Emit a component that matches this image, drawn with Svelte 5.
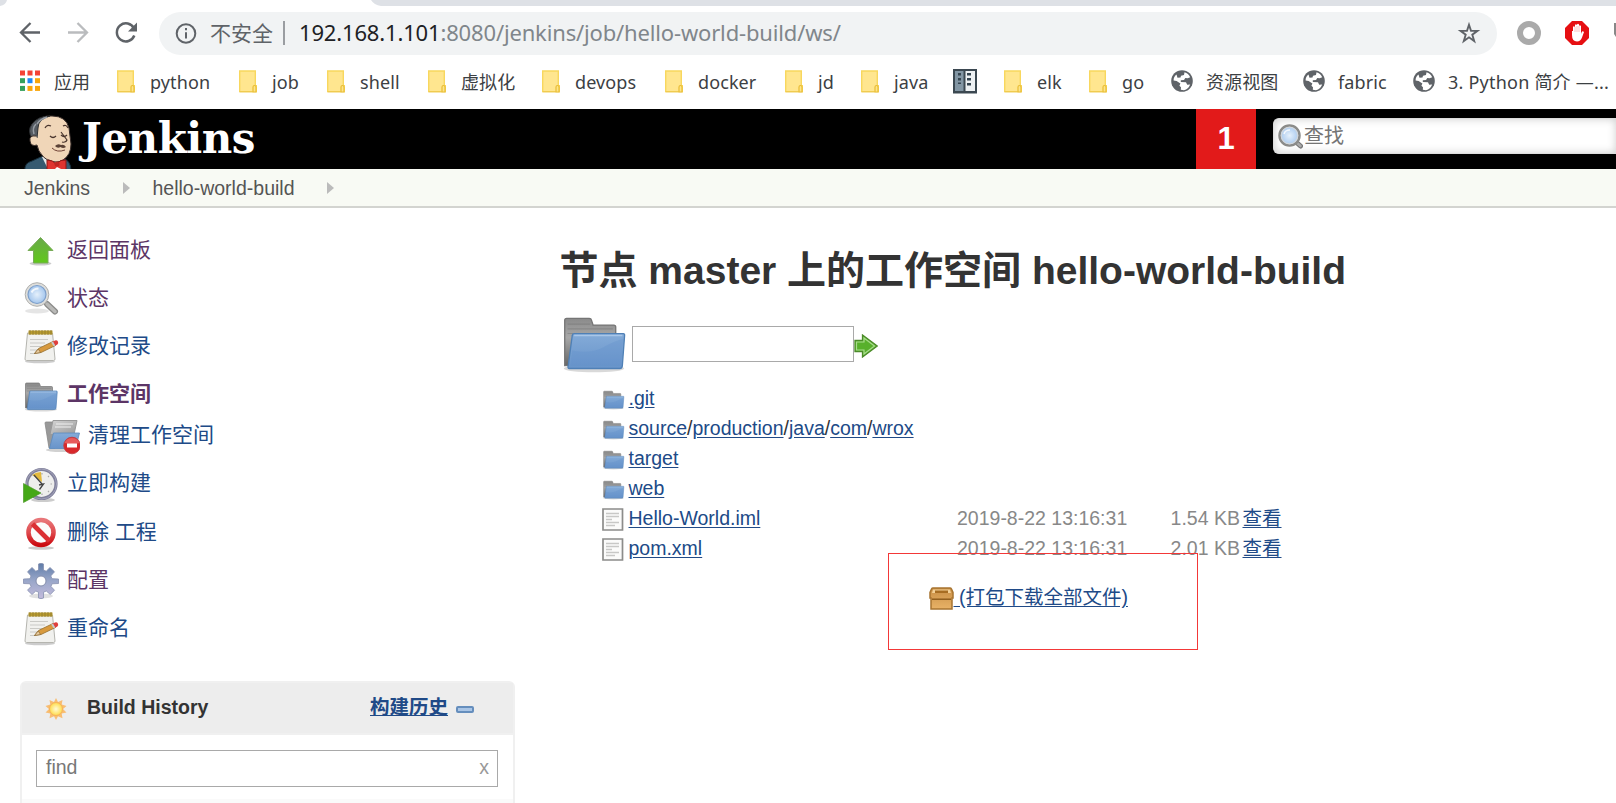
<script>
  const bookmarks = [
    { icon: 'apps', label: '应用', width: 97 },
    { icon: 'folder', label: 'python', width: 122 },
    { icon: 'folder', label: 'job', width: 88 },
    { icon: 'folder', label: 'shell', width: 101 },
    { icon: 'folder', label: '虚拟化', width: 114 },
    { icon: 'folder', label: 'devops', width: 123 },
    { icon: 'folder', label: 'docker', width: 120 },
    { icon: 'folder', label: 'jd', width: 76 },
    { icon: 'folder', label: 'java', width: 92 },
    { icon: 'book', label: '', width: 51 },
    { icon: 'folder', label: 'elk', width: 85 },
    { icon: 'folder', label: 'go', width: 82 },
    { icon: 'globe', label: '资源视图', width: 132 },
    { icon: 'globe', label: 'fabric', width: 110 },
    { icon: 'globe', label: '3. Python 简介 —...', width: 210 }
  ];
  const tasks = [
    { icon: 'up', label: '返回面板', visited: true },
    { icon: 'search', label: '状态', visited: true },
    { icon: 'notepad', label: '修改记录' },
    { icon: 'folder', label: '工作空间', visited: true, active: true },
    { icon: 'wipe', label: '清理工作空间', sub: true },
    { icon: 'clock', label: '立即构建' },
    { icon: 'stop', label: '删除 工程' },
    { icon: 'gear', label: '配置', visited: true },
    { icon: 'notepad', label: '重命名' }
  ];
  const files = [
    { path: ['.git'] },
    { path: ['source', 'production', 'java', 'com', 'wrox'] },
    { path: ['target'] },
    { path: ['web'] },
    { path: ['Hello-World.iml'], date: '2019-8-22 13:16:31', size: '1.54 KB' },
    { path: ['pom.xml'], date: '2019-8-22 13:16:31', size: '2.01 KB' }
  ];
  const dots = ['#f44336', '#f44336', '#f44336', '#34a05c', '#1e88f5', '#f9a60a', '#34a05c', '#f9a60a', '#f9a60a'];
</script>

{#snippet folder(size)}
  <svg width={size} height={size} viewBox="0 0 36 36">
    <ellipse cx="18" cy="31.500" rx="16" ry="2" fill="#000" opacity=".15" />
    <path d="M2.500 30V6q0-1 1-1h12q1 0 1.200 1l.8 2.500h11q1 0 1 1V29z" fill="url(#grey)" stroke="#757575" stroke-width=".7" />
    <path d="M4 8h12M4 10.500h24M4 13h24" stroke="#777" stroke-width=".6" opacity=".5" />
    <path d="M7.500 13H33.500q.8 0 .7 1L33 30q-.1 1.500-1.300 1.500H5q-1 0-.7-1.200l2.200-16.300q.1-1 1-1z" fill="url(#blue)" stroke="#4f80b6" stroke-width=".7" />
    <path d="M7.500 14h25.500" stroke="#a9c6e8" stroke-width=".8" />
    <path d="M6.500 22q10 2 17-2t10-4l-1.200 14H5.500z" fill="#5f8fcb" opacity=".3" />
  </svg>
{/snippet}

{#snippet loupe(size)}
  <svg width={size} height={size} viewBox="0 0 36 36">
    <ellipse cx="14" cy="30" rx="12" ry="2.500" fill="#000" opacity=".1" />
    <path d="M24 23l8 7.500" stroke="#8b8b89" stroke-width="6" stroke-linecap="round" />
    <path d="M24 23l8 7.500" stroke="#b9b9b7" stroke-width="3.500" stroke-linecap="round" />
    <circle cx="14" cy="13.500" r="11.800" fill="#dededb" stroke="#b0b0ae" stroke-width="1" />
    <circle cx="14" cy="13.500" r="9" fill="url(#lens)" stroke="#7d9fca" stroke-width="1.200" />
    <path d="M8.500 11.500q2-4 7-4" stroke="#fff" stroke-width="2" fill="none" opacity=".8" />
  </svg>
{/snippet}

{#snippet searchLoupe()}
  <svg width="25" height="25" viewBox="0 0 25 25">
    <path d="M18 18l4.500 4" stroke="#777" stroke-width="5" stroke-linecap="round" />
    <path d="M18.500 18.500l4 3.500" stroke="#aaa" stroke-width="2.500" stroke-linecap="round" />
    <circle cx="11.500" cy="11.500" r="10" fill="url(#lens)" stroke="#8b8b89" stroke-width="2.500" />
    <circle cx="11.500" cy="11.500" r="8.300" fill="none" stroke="#d2d6da" stroke-width="1.200" />
    <path d="M6 10q1-4 6-4" stroke="#fff" stroke-width="1.500" fill="none" opacity=".8" />
  </svg>
{/snippet}

{#snippet taskIcon(name)}
  {#if name === 'folder'}
    {@render folder(36)}
  {:else if name === 'search'}
    {@render loupe(36)}
  {:else}
    <svg width="36" height="36" viewBox="0 0 36 36">
      {#if name === 'up'}
        <ellipse cx="17.500" cy="30.500" rx="11" ry="2" fill="#000" opacity=".2" />
        <path d="M17.500 4.500L30 17.500H25V30H10.500V17.500H5z" fill="url(#green)" stroke="#78ab58" stroke-width="1" stroke-linejoin="round" />
      {:else if name === 'notepad'}
        <ellipse cx="17" cy="32.500" rx="15" ry="1.800" fill="#000" opacity=".2" />
        <path d="M4.500 4h25l2.500 26q0 1.500-1.500 1.500h-27Q2 31.500 2 30z" fill="#f1f1ee" stroke="#b5b5af" stroke-width="1" />
        <path d="M5.500 1.500h24v4h-24z" fill="#b89b2e" />
        <path d="M7 1v5M10 1v5M13 1v5M16 1v5M19 1v5M22 1v5M25 1v5M28 1v5" stroke="#8d7932" stroke-width=".8" />
        <path d="M7 10.500h18M7 14h15M7 17.500h12M7 21h8M7 24.500h6" stroke="#cacac6" stroke-width="1.200" />
        <path d="M11.500 24.500l4-5L30 12.500l2.500 4L18 23.500z" fill="#d89a3e" stroke="#95702f" stroke-width=".8" />
        <path d="M11.500 24.500l3.800-4.500 2.200 3.500z" fill="#e9cda1" stroke="#80602f" stroke-width=".6" />
        <path d="M29.500 12.700l2.500-1.200q2-.6 2.900 1t-.5 3l-2.200 1.200z" fill="#df3f3c" />
        <path d="M28.200 13.400l1.800-.9 2.300 4-1.700.8z" fill="#c6c9cc" />
      {:else if name === 'wipe'}
        <ellipse cx="17" cy="31" rx="15" ry="2" fill="#000" opacity=".18" />
        <path d="M1 4q0-1 1-1h7l2 26H5z" fill="#999" stroke="#888" stroke-width=".8" />
        <path d="M9 1.500h24l-3 14H6z" fill="url(#paper)" stroke="#999" stroke-width="1" />
        <path d="M12 5h17M11 8h16" stroke="#f0f0f0" stroke-width="1.200" />
        <path d="M9.500 14H35.500l-4 15.500H5.500z" fill="url(#blue)" stroke="#5b8abf" stroke-width=".8" />
        <circle cx="28" cy="26.500" r="8.300" fill="#d8282b" stroke="#c13a3f" stroke-width=".8" />
        <path d="M20.500 24q2-5 7.500-5t7.500 5q-7 2-15 0z" fill="#ef7777" opacity=".65" />
        <path d="M23 24.500h10v4H23z" fill="#fff" />
      {:else if name === 'clock'}
        <ellipse cx="20" cy="33" rx="12" ry="2" fill="#000" opacity=".2" />
        <circle cx="18.500" cy="17" r="14.500" fill="#eeeeec" stroke="#80809b" stroke-width="3.200" />
        <circle cx="18.500" cy="17" r="15" fill="none" stroke="#aaaac0" stroke-width=".8" />
        <path d="M19 15L9 8q4-3 9-3z" fill="#e3b93d" />
        <path d="M11 8l8 9M16 18l4.500-1-4 5.500" stroke="#444" stroke-width="1.300" fill="none" />
        <path d="M19 6v1.500M29 17h-1.500M19 28v-1.500M26 9l-1 1M26 25l-1-1" stroke="#aaa" stroke-width="1.200" />
        <path d="M.5 16.500v19L18 26z" fill="#45a817" stroke="#4d9a29" stroke-width=".7" />
      {:else if name === 'stop'}
        <ellipse cx="18" cy="33" rx="13" ry="1.800" fill="#000" opacity=".2" />
        <circle cx="18" cy="17.500" r="12.500" fill="#fbfbfb" stroke="url(#red)" stroke-width="4.600" />
        <path d="M9.500 9l17 17" stroke="#db3034" stroke-width="4.600" />
      {:else if name === 'gear'}
        <ellipse cx="18" cy="33" rx="12" ry="2.500" fill="#000" opacity=".12" />
        <path d="M15.500 7V1q2.500-1.500 5 0v6l2.700 1.200L27 4.500l4.500 4.300-3.700 4.100 1.200 2.800 6.500.3v4.500L29 20.800l-1 2.700 3.500 3.700-4.200 4.300-4-3.500-2.800 1.200V35q-2.500 1.200-5 0v-5.800L12.800 28 9 31.500l-4.500-4.300L8 23.500l-1-2.700-6.500-.3V16l6.500-.3 1-2.800-3.500-4.100L9 4.500l3.800 3.700z" fill="url(#gear)" stroke="#8790b0" stroke-width=".8" stroke-linejoin="round" />
        <circle cx="18" cy="18" r="5" fill="#fff" stroke="#858eac" stroke-width="1" />
      {/if}
    </svg>
  {/if}
{/snippet}

<svg class="defs" width="0" height="0" aria-hidden="true">
  <defs>
    <linearGradient id="grey" x2="0" y2="1"><stop stop-color="#8a8a8a" /><stop offset=".4" stop-color="#a8a8a8" /><stop offset="1" stop-color="#666" /></linearGradient>
    <linearGradient id="paper" x2="1" y2="1"><stop stop-color="#d5d5d5" /><stop offset="1" stop-color="#999" /></linearGradient>
    <linearGradient id="blue" x2="0" y2="1"><stop stop-color="#84abd8" /><stop offset="1" stop-color="#6894ca" /></linearGradient>
    <linearGradient id="green" x2="0" y2="1"><stop stop-color="#69a94a" /><stop offset="1" stop-color="#60c81a" /></linearGradient>
    <linearGradient id="red" x2="0" y2="1"><stop stop-color="#e87679" /><stop offset=".5" stop-color="#df4a4e" /><stop offset="1" stop-color="#cb0a10" /></linearGradient>
    <linearGradient id="gear" x2="0" y2="1"><stop stop-color="#5e7ca8" /><stop offset=".5" stop-color="#9aa7c9" /><stop offset="1" stop-color="#c3bbdc" /></linearGradient>
    <radialGradient id="lens"><stop stop-color="#e5f0fb" /><stop offset="1" stop-color="#a4c6ed" /></radialGradient>
    <radialGradient id="sun"><stop stop-color="#fffbd5" /><stop offset="1" stop-color="#ffdc4c" /></radialGradient>
    <linearGradient id="box" x2="0" y2="1"><stop stop-color="#c98f45" /><stop offset="1" stop-color="#e8b267" /></linearGradient>
  </defs>
</svg>

<div class="window">
  <div class="tabs">
    <svg width="1616" height="6" viewBox="0 0 1616 6">
      <path d="M0 0h7Q6 5 0 6zM371 0h1245v6H381q-7-1-10-6z" fill="#dee1e6" />
    </svg>
  </div>
  <div class="toolbar">
    <svg class="nav" width="140" height="28" viewBox="0 0 140 28" fill="none" stroke-width="2.300">
      <path d="M40 14.500H21.500M30.500 5L21 14.500l9.500 9.500" stroke="#5f6368" />
      <path d="M68 14.500h18.500M77.500 5L87 14.500 77.500 24" stroke="#babcbe" />
      <path d="M134 10.500A9 9 0 1 0 134.300 17.500" stroke="#5f6368" stroke-width="2.500" />
      <path d="M137 4.500v9h-9z" fill="#5f6368" />
    </svg>
    <div class="omnibox">
      <svg width="22" height="22" viewBox="0 0 22 22"><circle cx="11" cy="11.500" r="9.300" fill="none" stroke="#5f6368" stroke-width="2" /><path d="M10 6h2v2.200h-2zM10 10.200h2v6.300h-2z" fill="#5f6368" /></svg>
      <span class="insecure">不安全</span>
      <i></i>
      <span class="url"><b>192.168.1.101</b>:8080/jenkins/job/hello-world-build/ws/</span>
      <svg class="star" width="24" height="24" viewBox="0 0 24 24"><path d="M12 3.700l2 6 6.500.1-5.200 3.900 1.900 6.300L12 16.300 6.800 20l1.900-6.300-5.200-3.900 6.500-.1z" fill="none" stroke="#5f6368" stroke-width="1.900" /></svg>
    </div>
    <svg class="extensions" width="119" height="28" viewBox="0 0 119 28">
      <circle cx="32" cy="14" r="9" fill="none" stroke="#aaa" stroke-width="6" />
      <path d="M75 2h10l7 7v10l-7 7H75l-7-7V9z" fill="#e60f12" />
      <path d="M75 12v4q0 6.500 5 6.500 3.500 0 5-4l2-5.500q-1.500-1.500-2.500.5L84 15V7q-1.200-1.500-2 0V5.500q-1-1.500-2 0V6q-1.200-1.300-2 0v2q-1.300-1.300-2 0v4z" fill="#fff" />
      <path d="M80 7v6M82 7v6M78 8v5" stroke="#f68282" stroke-width=".5" />
      <path d="M117 4h2v14l-2-3z" fill="#888" />
    </svg>
  </div>

  <nav class="bookmarks">
    {#each bookmarks as item}
      <a style="width: {item.width}px" class:wide={item.icon === 'globe'} class:apps={item.icon === 'apps'}>
        {#if item.icon === 'apps'}
          <svg width="20" height="24" viewBox="0 0 20 24">
            {#each dots as color, n}<rect x={(n % 3) * 7.500} y={.5 + Math.floor(n / 3) * 7.700} width="5" height="5" fill={color} />{/each}
          </svg>
        {:else if item.icon === 'folder'}
          <svg width="18" height="24" viewBox="0 0 18 24"><path d="M.7 1h15.600v14.600h1v6H.7z" fill="#ffe68f" stroke="#f8d75e" stroke-width="1.400" /><path d="M.7 21.800h12.800" stroke="#edc64b" /><path d="M14 22v-5q0-1.500 1.500-1.500T17 17v5z" fill="#fde589" stroke="#e9bd36" stroke-width="1.200" /></svg>
        {:else if item.icon === 'book'}
          <svg width="24" height="26" viewBox="0 0 24 26"><path d="M0 0h24v24.500H0z" fill="#3b4851" /><path d="M2 2h8.500v20H2z" fill="#8296a4" /><path d="M12.500 2H22v20h-9.500z" fill="#edf1f3" /><path d="M5 4h3v2.500H5zM5 9h3v2.500H5zM5 13.500h3V15H5zM14 4h4v2.500h-4zM14 9h4v2.500h-4zM14 14h4v2.500h-4z" fill="#354550" /></svg>
        {:else}
          <svg width="22" height="24" viewBox="0 0 22 24"><circle cx="11" cy="11" r="10.800" fill="#5f6368" /><path d="M13.500 2.300q4 1 5.700 5l-2.500 1-2.400-.4-1.300 2-3.200.4v1.600l5.200.3 1.200 2.600 3-.4q-1.800 4.600-6.200 5.900l-3.200-.5.200-2.500-1.600-1.500 1-2.300-3.800-2.500-3-.6Q2.400 7 5.500 4.500l1 3.200 3-.2.500-1.700 3-.9z" fill="#fff" /></svg>
        {/if}
        <span>{item.label}</span>
      </a>
    {/each}
  </nav>

  <header>
    <svg class="butler" width="50" height="55" viewBox="0 0 50 55">
      <path d="M1 57q-1-8 7-10l11-5 19 2q9 2 9 13z" fill="#365a70" stroke="#18303e" />
      <path d="M18 43l7 14h14l1-14z" fill="#e7eaec" />
      <path d="M10 25q-4-9 1-15Q17 1 28 2q14 0 17 12l2 16q0 11-8 16-7 4-14 0-8-3-11-12z" fill="#f0d6b8" stroke="#392e2b" />
      <path d="M8 24Q3 17 8 10q6-8 18-8-12 3-12 12l-1 10z" fill="#555b62" stroke="#2c2e31" />
      <path d="M13 10q3-5 10-7M10 20q-2-6 2-10" stroke="#979da4" stroke-width="1.500" fill="none" />
      <path d="M12 22q-7-1-6 5t7 4l2 6q4 7 10 10" fill="#f0d6b8" stroke="#392e2b" />
      <path d="M21 14q2-4 6-2M39 12q3-2 5 2M26 22q3 3 6 0M37 21q3 3 6 0M37 18l6 8q-1 3-5 2" stroke="#49352d" stroke-width="1.200" fill="none" />
      <path d="M31 32q3-3 6-1 3-1 5 2-3 2-5.500 0-3 2-5.500-1z" fill="#5b4236" />
      <path d="M28 34q5 5 13 2" fill="none" stroke="#704336" />
      <path d="M23 46q6 0 9 4 5-5 10-4v10H23z" fill="#df342f" stroke="#8d1715" /><circle cx="33" cy="50" r="2.500" fill="#bf2722" /><path d="M31 55l2-2 4 2z" fill="#fff" />
    </svg>
    <span class="brand">Jenkins</span>
    <span class="alert">1</span>
    <div class="search">{@render searchLoupe()}<span>查找</span></div>
  </header>

  <div class="crumbs">
    <a class="home">Jenkins</a><i></i><a class="job">hello-world-build</a><i></i>
  </div>

  <div class="page">
    <aside>
      <div class="tasks">
        {#each tasks as task}
          <a class:visited={task.visited} class:active={task.active} class:sub={task.sub}>{@render taskIcon(task.icon)}<span>{task.label}</span></a>
        {/each}
      </div>
      <section class="history">
        <div class="head">
          <svg width="22" height="22" viewBox="0 0 22 22"><path d="M11 0l2 4 4.500-2-.8 4.500L21.500 8 18 11l3.500 3.500-4.800 1 .8 4.700-4.500-2-2 3.800-2-3.800-4.500 2 .8-4.700-4.800-1L4 11 .5 8l4.800-1.500L4.500 2 9 4z" fill="#f8bd72" /><circle cx="11" cy="11" r="6.500" fill="url(#sun)" stroke="#f6b25b" /></svg>
          <strong>Build History</strong>
          <a>构建历史</a>
          <em></em>
        </div>
        <div class="body"><div class="find"><span>find</span><small>x</small></div></div>
      </section>
    </aside>

    <main>
      <h1>节点 master 上的工作空间 hello-world-build</h1>
      <div class="path">
        <div class="big">{@render folder(68)}</div>
        <div class="input"></div>
        <svg width="24" height="24" viewBox="0 0 24 24"><path d="M1 6.500h7.500V1L23.300 12 8.500 23v-5.500H1z" fill="#58b02c" stroke="#4b8a29" stroke-width="1.300" /><path d="M2.500 8H10V4l10.500 8L10 20v-4H2.500z" fill="none" stroke="#a8db8d" stroke-width="1.200" /></svg>
      </div>
      <div class="files">
        {#each files as file}
          <div class="row">
            <div class="icon">
              {#if file.date}
                <svg width="22" height="24" viewBox="0 0 22 24"><path d="M1 1h19.500v21H1z" fill="#fbfbfa" stroke="#8c8c8a" stroke-width="1.700" /><path d="M4 5.500h13M4 8.500h13M4 11.500h6M4 14.500h13M4 17.500h9" stroke="#c8c8c6" stroke-width="1.300" /></svg>
              {:else}{@render folder(23)}{/if}
            </div>
            <div class="name">{#each file.path as part, n}{#if n}/{/if}<a>{part}</a>{/each}</div>
            {#if file.date}<span class="date">{file.date}</span><span class="size">{file.size}</span><a class="view">查看</a>{/if}
          </div>
        {/each}
      </div>
      <div class="archive">
        <svg width="25" height="23" viewBox="0 0 25 23"><path d="M4 1h17q1 0 1.500 1L24 5.500V11h-1v11H2V11H1V5.500L2.500 2Q3 1 4 1z" fill="url(#box)" stroke="#a87430" stroke-width="1.500" /><path d="M4 2.500h17l1 3.500H3z" fill="#f3d096" /><path d="M6 3.500h13v2.500H6z" fill="#a76d22" /><path d="M3 12.200h19" stroke="#8a5718" stroke-width="1.400" /></svg><a>&nbsp;(打包下载全部文件)</a>
      </div>
      <div class="mark"></div>
    </main>
  </div>
</div>

<style>
  :global(body) { margin: 0; overflow: hidden; background: #fff; }
  .defs { position: absolute; }
  svg { flex: none; display: block; }
  .window { width: 1616px; height: 803px; overflow: hidden; background: #fff; font: 19.500px/30px "Liberation Sans", "Noto Sans CJK SC", sans-serif; color: #333; }
  .tabs { height: 6px; }
  .toolbar { height: 56px; display: flex; align-items: flex-start; }
  .nav { margin-top: 12px; }
  .omnibox { margin: 6px 0 0 19px; width: 1338px; flex: none; height: 43px; border-radius: 22px; background: #f1f3f4; display: flex; align-items: center; box-sizing: border-box; padding: 0 16px 1px; font-family: "Noto Sans", "Noto Sans CJK SC", sans-serif; white-space: nowrap; }
  .insecure { margin-left: 13px; width: 73px; font: 21px/40px "Noto Sans CJK SC", sans-serif; color: #5f6368; padding-bottom: 3px; }
  .omnibox i { width: 2px; height: 24px; background: #9a9da1; }
  .url { margin-left: 14px; font-size: 22px; letter-spacing: -.16px; color: #80868b; flex: 1; padding-bottom: 2px; }
  .url b { font-weight: 400; color: #202124; }
  .extensions { margin: 13px 0 0; }
  .bookmarks { height: 47px; padding-left: 20px; display: flex; box-sizing: border-box; }
  .bookmarks a { flex: none; display: flex; height: 40px; align-items: center; font: 18px/38px "Noto Sans", "Noto Sans CJK SC", sans-serif; color: #3c4043; white-space: nowrap; gap: 15px; letter-spacing: .1px; }
  .bookmarks a.wide { gap: 13px; }
  .bookmarks a.wide:last-child { letter-spacing: .22px; }
  .bookmarks a.apps { gap: 14px; }
  header { height: 60px; background: #000; display: flex; }
  .butler { margin: 5px 0 0 24px; }
  .brand { margin-left: 8px; width: 1114px; font: bold 42px/59px "DejaVu Serif", serif; color: #fff; letter-spacing: -.5px; }
  .alert { width: 60px; background: #e21a1a; color: #fff; font-weight: 700; font-size: 31px; line-height: 59px; text-align: center; }
  .search { margin: 9px 0 0 17px; width: 343px; flex: none; box-sizing: border-box; height: 36px; border-radius: 6px 0 0 6px; border: 1px solid #ddd; border-right: 0; background: #fff; box-shadow: inset 0 0 8px #ccc; display: flex; align-items: center; padding-left: 4px; }
  .search span { font: 20px/32px "Noto Sans CJK SC", sans-serif; color: #757575; margin: 0 0 2px 1px; }
  .crumbs { height: 37px; border-bottom: 2px solid #d3d4d0; background: #f8faf4; display: flex; align-items: center; padding-left: 24px; color: #555; }
  .crumbs a { line-height: 38px; white-space: nowrap; }
  .home { width: 98.500px; } .job { width: 174px; }
  .crumbs i { border-left: 7px solid #bbb; border-top: 6px solid transparent; border-bottom: 6px solid transparent; margin-right: 23px; }
  .page { display: flex; height: 595px; }
  aside { width: 559.500px; flex: none; padding: 19px 0 0 20px; box-sizing: border-box; }
  .tasks { height: 454px; padding-left: 3px; }
  .tasks a { display: flex; align-items: center; height: 48.200px; font: 21px/30px "Liberation Sans", "Noto Sans CJK SC", sans-serif; color: #204a87; }
  .tasks a span { margin: -3px 0 0 8px; }
  .tasks a.visited { color: #5c3566; }
  .tasks a.active { font-weight: 700; }
  .tasks a.sub { padding-left: 21px; height: 34px; margin-bottom: 7px; }
  .history { width: 495px; height: 130px; box-sizing: border-box; border: 2px solid #f0f0f0; border-radius: 6px 6px 0 0; background: #fafafa; }
  .head { height: 50px; background: #ededed; border-bottom: 2px solid #f0f0f0; display: flex; align-items: center; padding-left: 23px; }
  .head svg { margin-top: 2px; }
  .head strong { margin: -2px 0 0 20px; width: 283px; }
  .head a { margin-top: -2px; font-weight: 700; color: #204a87; text-decoration: underline; }
  .head em { width: 14px; height: 3px; background: #a9c5e6; border: 2px solid #658ebd; border-radius: 2px; margin: 2px 0 0 8px; }
  .body { height: 64px; background: #fff; padding: 15px 15px 0 14px; box-sizing: border-box; }
  .find { height: 37px; box-sizing: border-box; border: 1px solid #a9a9a9; display: flex; justify-content: space-between; padding: 0 8px 0 9px; line-height: 33px; color: #777; }
  .find small { font-size: 19.500px; color: #999; }
  main { position: relative; width: 1056.500px; flex: none; }
  h1 { margin: 33px 0 0; font-size: 39px; line-height: 60px; white-space: nowrap; }
  .path { height: 80px; display: flex; align-items: flex-start; padding-left: .500px; }
  .big { width: 72px; padding-top: 8px; box-sizing: border-box; height: 76px; }
  .input { width: 222px; height: 36px; box-sizing: border-box; border: 1px solid #a9a9a9; margin-top: 25px; }
  .path > svg { margin-top: 33px; }
  .files { padding: 2px 0 0 42.500px; }
  .row { display: flex; height: 30px; white-space: nowrap; }
  .icon { width: 26.500px; padding-top: 5px; box-sizing: border-box; flex: none; }
  .name { width: 328.500px; }
  .row a, .archive a { color: #204a87; text-decoration: underline; text-underline-offset: 2px; }
  .date, .size { color: #888; }
  .date { width: 172px; }
  .size { width: 111px; text-align: right; }
  .view { margin-left: 2.500px; }
  .archive { margin: 19px 0 0 369.500px; display: flex; white-space: nowrap; }
  .archive svg { margin: 5px -.500px 0 0; }
  .mark { position: absolute; left: 328.500px; top: 345px; width: 310px; height: 97px; box-sizing: border-box; border: 1px solid #f33838; }
</style>
